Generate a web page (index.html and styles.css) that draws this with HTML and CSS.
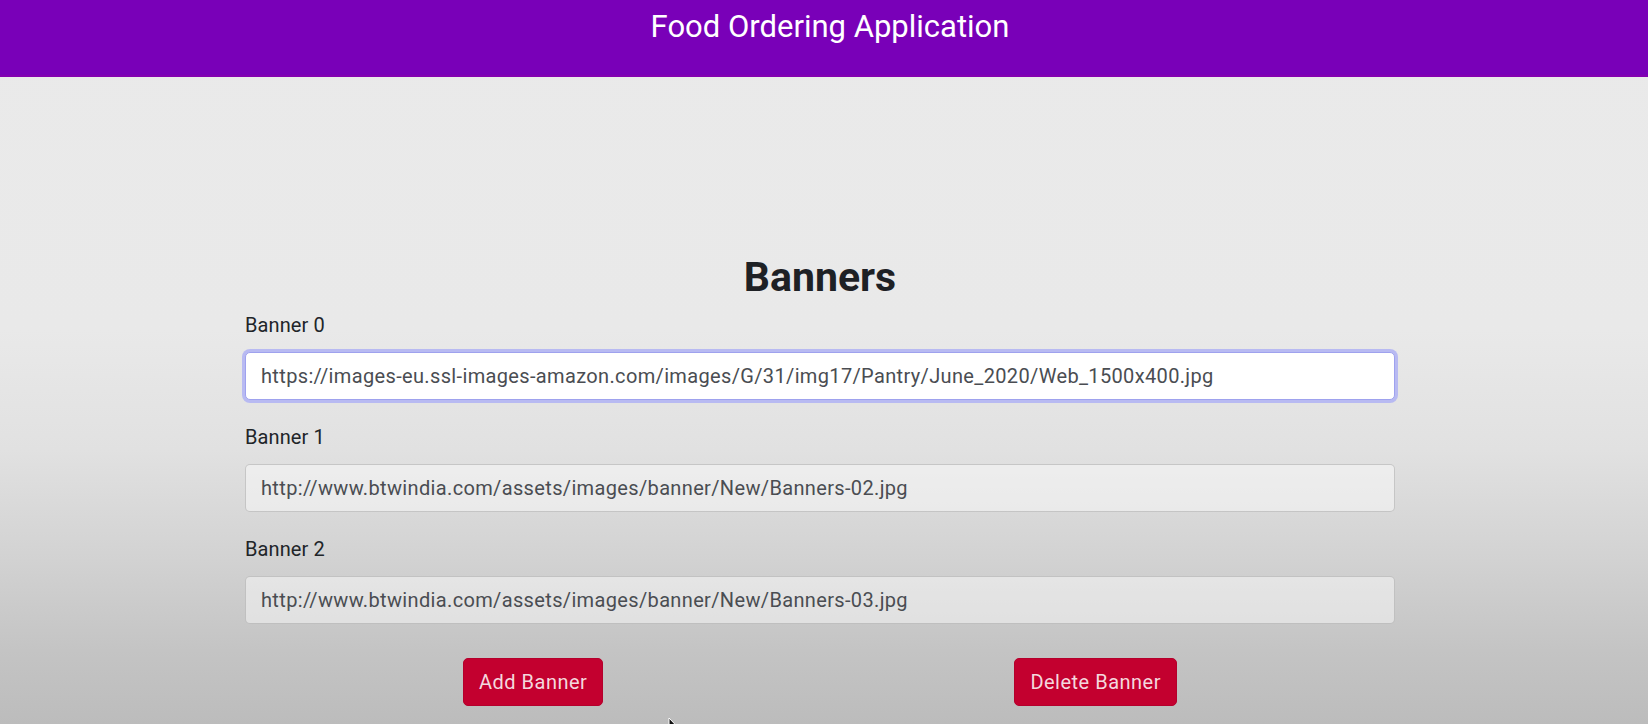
FILE: index.html
```html
<!DOCTYPE html>
<html lang="en">
<head>
<meta charset="utf-8">
<title>Food Ordering Application</title>
<link rel="stylesheet" href="styles.css">
</head>
<body>
<header class="app-header">
  <h1 class="app-title">Food Ordering Application</h1>
</header>
<main class="page">
  <section class="banners">
    <h2 class="banners-title">Banners</h2>
    <form class="banner-form">
      <div class="form-group">
        <label class="form-label" for="b0">Banner 0</label>
        <input class="form-control is-focused" id="b0" type="text" value="https://images-eu.ssl-images-amazon.com/images/G/31/img17/Pantry/June_2020/Web_1500x400.jpg">
      </div>
      <div class="form-group">
        <label class="form-label" for="b1">Banner 1</label>
        <input class="form-control" id="b1" type="text" value="http://www.btwindia.com/assets/images/banner/New/Banners-02.jpg">
      </div>
      <div class="form-group">
        <label class="form-label" for="b2">Banner 2</label>
        <input class="form-control" id="b2" type="text" value="http://www.btwindia.com/assets/images/banner/New/Banners-03.jpg">
      </div>
      <div class="actions">
        <button class="btn-danger" type="button">Add Banner</button>
        <button class="btn-danger" type="button">Delete Banner</button>
      </div>
    </form>
  </section>
  <svg class="cursor" width="14" height="20" viewBox="0 0 14 20"><path d="M1 1 L1 16 L4.5 12.5 L7 18 L9 17 L6.5 11.5 L11 11.5 Z" fill="#111" stroke="#fff" stroke-width="1"/></svg>
</main>
</body>
</html>
```

FILE: styles.css
```css
* { box-sizing: border-box; }

html, body {
  margin: 0;
  padding: 0;
  height: 100%;
}

body {
  font-family: Roboto, "Noto Sans", "Liberation Sans", sans-serif;
  color: #212529;
  background: linear-gradient(to bottom, #eaeaea 0px, #e9e9e9 330px, #e1e1e1 450px, #d2d2d2 560px, #c4c4c4 650px, #bcbcbc 724px);
  overflow: hidden;
}

.app-header {
  height: 77px;
  background: #7900b8;
  border-bottom: 2px solid #8300b0;
  padding-top: 10px;
}

.app-title {
  margin: 0;
  padding-left: 12px;
  text-align: center;
  font-weight: 400;
  font-size: 31px;
  line-height: 34px;
  color: #ffffff;
}

.page {
  position: relative;
  height: calc(100% - 77px);
  padding-right: 8px;
  padding-top: 176px;
}

.banners {
  width: 1150px;
  margin: 0 auto;
}

.banners-title {
  margin: 0 0 11px;
  text-align: center;
  font-size: 41px;
  line-height: 48px;
  font-weight: 700;
  color: #1e2125;
}

.form-group {
  margin-bottom: 24px;
}

.form-label {
  display: block;
  font-size: 20px;
  line-height: 26px;
  margin-bottom: 14px;
  letter-spacing: 0.1px;
  color: #212529;
}

.form-control {
  display: block;
  width: 100%;
  height: 48px;
  padding: 8px 15px;
  font-family: Roboto, "Noto Sans", "Liberation Sans", sans-serif;
  font-size: 20px;
  line-height: 30px;
  letter-spacing: 0.35px;
  color: #4a4d52;
  background: rgba(255, 255, 255, 0.45);
  border: 1px solid rgba(150, 150, 150, 0.45);
  border-radius: 5px;
  outline: none;
}

.form-control.is-focused {
  background: #ffffff;
  border-color: #9fa2ee;
  box-shadow: 0 0 0 3px #b8baf2;
}

.actions {
  display: flex;
  justify-content: space-between;
  padding: 0 218px;
  margin-top: 34px;
}

.btn-danger {
  height: 48px;
  padding: 8px 15px;
  font-family: Roboto, "Noto Sans", "Liberation Sans", sans-serif;
  font-size: 20px;
  line-height: 30px;
  letter-spacing: 0.5px;
  color: #f4d8de;
  background: #c3002f;
  border: 1px solid #b5002c;
  border-radius: 5px;
}

.cursor {
  position: absolute;
  left: 668px;
  top: 640px;
}
```
